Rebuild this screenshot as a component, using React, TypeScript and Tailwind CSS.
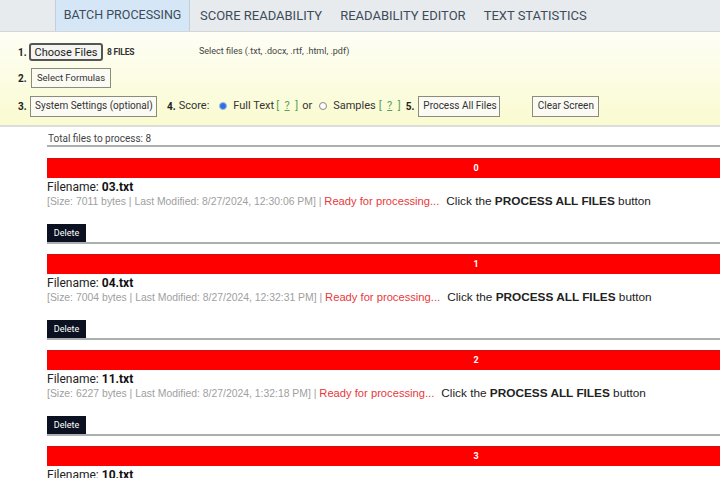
import React from 'react';

interface FileItem {
  name: string;
  size: number;
  modified: string;
}

const files: FileItem[] = [
  { name: '03.txt', size: 7011, modified: '8/27/2024, 12:30:06 PM' },
  { name: '04.txt', size: 7004, modified: '8/27/2024, 12:32:31 PM' },
  { name: '11.txt', size: 6227, modified: '8/27/2024, 1:32:18 PM' },
  { name: '10.txt', size: 6841, modified: '8/27/2024, 1:30:02 PM' },
];

const tabs = ['BATCH PROCESSING', 'SCORE READABILITY', 'READABILITY EDITOR', 'TEXT STATISTICS'];

const Btn: React.FC<{ children: React.ReactNode; className?: string }> = ({ children, className = '' }) => (
  <button
    className={`border border-[#8c8c7a] bg-[#fbfbf4] text-[#333] leading-none px-[4px] ${className}`}
  >
    {children}
  </button>
);

// green "[ ? ]" help link
const Help: React.FC<{ className?: string }> = ({ className = '' }) => (
  <span className={`inline-flex w-[22px] justify-between text-[#5aa05a] ${className}`}>
    <span>[</span>
    <span className="underline">?</span>
    <span>]</span>
  </span>
);

const FileBlock: React.FC<{ file: FileItem; index: number }> = ({ file, index }) => (
  <div className="border-b-2 border-[#aab0ae] mb-[10px]">
    {/* status bar */}
    <div className="h-[20px] w-[858px] bg-[#ff0000] border-t border-[#cc1010] flex items-center justify-center text-white text-[9px] font-bold">
      {index}
    </div>
    <div className="h-[17px] flex items-center text-[12px] text-[#222]">
      Filename:&nbsp;<span className="font-bold text-[#111]">{file.name}</span>
    </div>
    <div className="h-[13px] flex items-center whitespace-nowrap font-['Liberation_Sans',sans-serif]">
      <span className="text-[10.4px] text-[#a0a0a0]">
        [Size: {file.size} bytes | Last Modified: {file.modified}] |&nbsp;
      </span>
      <span className="text-[11.2px] text-[#e8383a]">Ready for processing...</span>
      <span className="text-[11.8px] text-[#222] ml-[7px]">
        Click the <span className="font-bold">PROCESS ALL FILES</span> button
      </span>
    </div>
    <div className="h-[16px]" />
    <button className="h-[18px] w-[39px] bg-[#0b1120] text-white text-[9px] leading-none block">Delete</button>
  </div>
);

export default function App() {
  return (
    <div className="w-[720px] h-[478px] overflow-hidden bg-white font-['Roboto',sans-serif] text-[#333]">
      {/* tab bar */}
      <div className="flex h-[32px] bg-[#e8ebee] border-b border-[#d2d6da] text-[13px] text-[#3d4b59]">
        <div className="w-[55px]" />
        {tabs.map((t, i) => (
          <div
            key={t}
            className={
              i === 0
                ? 'w-[135px] flex items-center justify-center bg-[#d5e7f6] border-x border-[#c3ced8] text-[12.5px]'
                : 'flex items-center pl-[10px] pr-[8px]'
            }
          >
            {t}
          </div>
        ))}
      </div>

      {/* control panel */}
      <div className="h-[95px] bg-gradient-to-b from-[#fefef6] to-[#fafbd0] border-b-2 border-[#dcdedc] pl-[18px] flex flex-col">
        <div className="mt-[7px] h-[26px] flex items-center">
          <span className="text-[10px] font-bold text-[#222] w-[11px]">1.</span>
          <button className="h-[18px] w-[74px] border-2 border-[#555] rounded-[3px] bg-[#f4f4f0] text-[11px] leading-none text-[#222]">
            Choose Files
          </button>
          <span className="text-[8.5px] font-bold ml-[4px] w-[92px] text-[#333] tracking-[-0.2px]">8 FILES</span>
          <span className="text-[9px] text-[#444]">Select files (.txt, .docx, .rtf, .html, .pdf)</span>
        </div>
        <div className="h-[26px] flex items-center">
          <span className="text-[10px] font-bold text-[#222] w-[13px]">2.</span>
          <Btn className="h-[20px] w-[80px] text-[9.5px]">Select Formulas</Btn>
        </div>
        <div className="mt-[1px] h-[28px] flex items-center text-[11px] whitespace-nowrap">
          <span className="text-[10px] font-bold text-[#222] w-[12px]">3.</span>
          <Btn className="h-[21px] w-[127px] text-[10px]">System Settings (optional)</Btn>
          <span className="ml-[10px] font-bold text-[10px] text-[#222]">4.</span>
          <span className="ml-[3px]">Score:</span>
          <span className="ml-[10px] w-[8px] h-[8px] rounded-full bg-[#2f6fe0] border border-[#9ab8f0]" />
          <span className="ml-[6px]">Full Text</span>
          <Help className="ml-[2px]" />
          <span className="ml-[4px]">or</span>
          <span className="ml-[7px] w-[8px] h-[8px] rounded-full bg-white border border-[#888]" />
          <span className="ml-[6px]">Samples</span>
          <Help className="ml-[3px]" />
          <span className="font-bold text-[10px] text-[#222] ml-[5px]">5.</span>
          <Btn className="h-[21px] w-[82px] text-[10px] ml-[4px]">Process All Files</Btn>
          <Btn className="h-[21px] w-[67px] text-[10px] ml-[32px]">Clear Screen</Btn>
        </div>
      </div>

      {/* file list */}
      <div className="pl-[47px]">
        <div className="mt-[4px] h-[16px] flex items-end border-b-2 border-[#aab0ae] text-[10px] leading-[12px] text-[#444] pl-[1px]">
          Total files to process: 8
        </div>
        <div className="h-[11px]" />
        {files.map((f, i) => (
          <FileBlock key={f.name} file={f} index={i} />
        ))}
      </div>
    </div>
  );
}
